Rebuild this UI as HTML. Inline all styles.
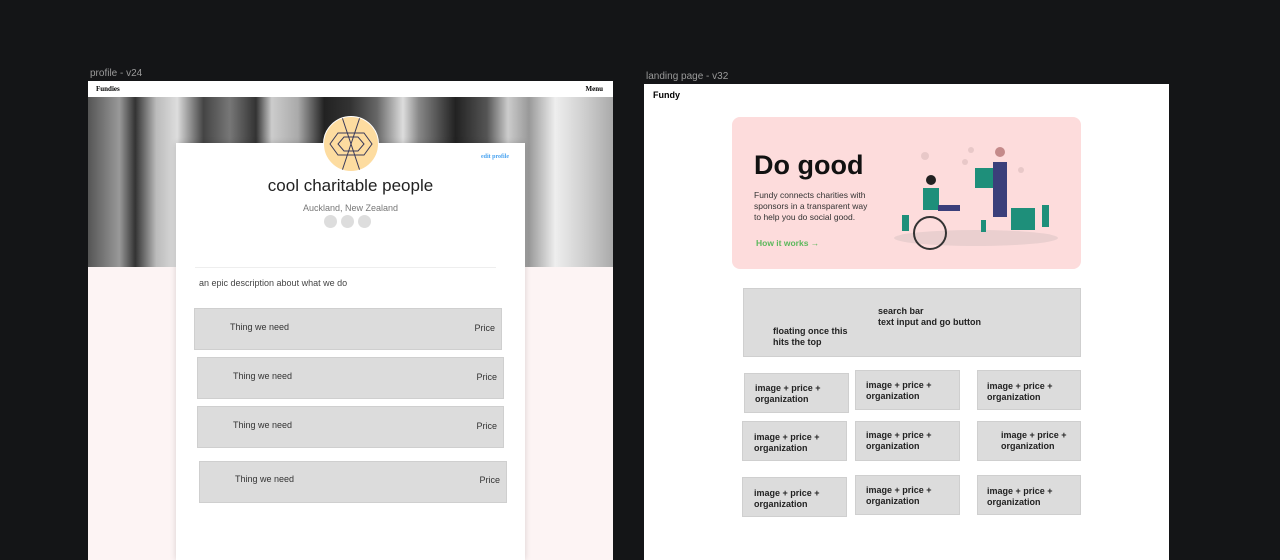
<!DOCTYPE html>
<html><head><style>
body{margin:0;width:1280px;height:560px;background:#141517;position:relative;overflow:hidden;font-family:"Liberation Sans",sans-serif}
.a{position:absolute}
.lbl{color:#9a9a9a;font-size:10px}
.g{background:#dcdcdc;border:1px solid #cfcfcf;box-sizing:border-box;position:absolute;font-size:9px;color:#333}
.p{font-size:9px;font-weight:bold;color:#222;line-height:11px}
</style></head><body>
<div class="a lbl" style="left:90px;top:68px">profile - v24</div>
<div class="a lbl" style="left:646px;top:71px">landing page - v32</div>

<!-- profile frame -->
<div class="a" style="left:88px;top:81px;width:525px;height:479px;background:#fdf4f4"></div>
<div class="a" style="left:88px;top:81px;width:525px;height:16px;background:#fff;font-family:'Liberation Serif',serif;font-size:7px;font-weight:bold">
<span class="a" style="left:8px;top:4px">Fundies</span><span class="a" style="right:10px;top:4px">Menu</span></div>
<div class="a" style="left:88px;top:97px;width:525px;height:170px;background:linear-gradient(90deg,#555 0,#999 6%,#333 9%,#bbb 13%,#ddd 17%,#444 22%,#777 27%,#333 32%,#ccc 35%,#aaa 40%,#222 45%,#333 50%,#666 55%,#ddd 60%,#888 63%,#222 70%,#555 76%,#ccc 80%,#999 84%,#eee 89%,#ccc 95%,#aaa 100%)"></div>
<div class="a" style="left:176px;top:143px;width:349px;height:417px;background:#fff;box-shadow:0 0 6px rgba(0,0,0,.15)"></div>
<div class="a" style="left:323px;top:116px;width:54px;height:54px;border-radius:50%;background:#fddca0;border:1px solid #fff;overflow:hidden">
<svg width="54" height="54" viewBox="0 0 54 54" fill="none" stroke="#3a3a5a" stroke-width="1"><path d="M18 0L36 54M36 0L18 54M0 27h0M14 16h26l8 11-8 11H14L6 27zM20 20h14l6 7-6 7H20l-6-7z"/></svg></div>
<div class="a" style="left:481px;top:154px;font-family:'Liberation Serif',serif;font-size:6px;color:#4aa3f0;font-weight:bold">edit profile</div>
<div class="a" style="left:176px;width:349px;top:176px;text-align:center;font-size:17px;color:#222">cool charitable people</div>
<div class="a" style="left:176px;width:349px;top:203px;text-align:center;font-size:9px;color:#777">Auckland, New Zealand</div>
<div class="a" style="left:324px;top:215px;width:13px;height:13px;border-radius:50%;background:#ddd"></div>
<div class="a" style="left:341px;top:215px;width:13px;height:13px;border-radius:50%;background:#ddd"></div>
<div class="a" style="left:358px;top:215px;width:13px;height:13px;border-radius:50%;background:#ddd"></div>
<div class="a" style="left:195px;top:267px;width:301px;height:1px;background:#eee"></div>
<div class="a" style="left:199px;top:278px;font-size:9px;color:#444">an epic description about what we do</div>
<div class="g" style="left:194px;top:308px;width:308px;height:42px"><span class="a" style="left:35px;top:13px">Thing we need</span><span class="a" style="right:6px;top:14px">Price</span></div>
<div class="g" style="left:197px;top:357px;width:307px;height:42px"><span class="a" style="left:35px;top:13px">Thing we need</span><span class="a" style="right:6px;top:14px">Price</span></div>
<div class="g" style="left:197px;top:406px;width:307px;height:42px"><span class="a" style="left:35px;top:13px">Thing we need</span><span class="a" style="right:6px;top:14px">Price</span></div>
<div class="g" style="left:199px;top:461px;width:308px;height:42px"><span class="a" style="left:35px;top:12px">Thing we need</span><span class="a" style="right:6px;top:13px">Price</span></div>

<!-- landing frame -->
<div class="a" style="left:644px;top:84px;width:525px;height:476px;background:#fff"></div>
<div class="a" style="left:653px;top:90px;font-size:9px;font-weight:bold">Fundy</div>
<div class="a" style="left:732px;top:117px;width:349px;height:152px;background:#fddcdc;border-radius:8px"></div>
<div class="a" style="left:754px;top:150px;font-size:27px;font-weight:bold;color:#111">Do good</div>
<div class="a" style="left:754px;top:190px;font-size:8.5px;color:#333;line-height:11px">Fundy connects charities with<br>sponsors in a transparent way<br>to help you do social good.</div>
<div class="a" style="left:756px;top:238px;font-size:8.5px;font-weight:bold;color:#5cb85c">How it works →</div>
<svg class="a" style="left:893px;top:140px" width="170" height="110">
<ellipse cx="83" cy="98" rx="82" ry="8" fill="#eacfcf"/>
<circle cx="32" cy="16" r="4" fill="#e8c8c8"/><circle cx="78" cy="10" r="3" fill="#e8c8c8"/><circle cx="72" cy="22" r="3" fill="#e8c8c8"/><circle cx="128" cy="30" r="3" fill="#e8c8c8"/>
<circle cx="37" cy="103" r="16" fill="none" stroke="#333" stroke-width="2" transform="translate(0,-10)"/>
<rect x="30" y="48" width="16" height="22" fill="#1e8f7a"/><rect x="45" y="65" width="22" height="6" fill="#3b3f7a"/>
<circle cx="38" cy="40" r="5" fill="#222"/>
<rect x="100" y="22" width="14" height="55" fill="#3b3f7a"/><circle cx="107" cy="12" r="5" fill="#c48a8a"/>
<rect x="82" y="28" width="18" height="20" fill="#1e8f7a"/>
<rect x="118" y="68" width="24" height="22" fill="#1e8f7a"/>
<rect x="9" y="75" width="7" height="16" fill="#1e8f7a"/><rect x="149" y="65" width="7" height="22" fill="#1e8f7a"/><rect x="88" y="80" width="5" height="12" fill="#1e8f7a"/>
</svg>
<div class="g" style="left:743px;top:288px;width:338px;height:69px"><span class="p a" style="left:134px;top:17px">search bar<br>text input and go button</span><span class="p a" style="left:29px;top:37px">floating once this<br>hits the top</span></div>
<div class="g" style="left:744px;top:373px;width:105px;height:40px"><span class="p a" style="left:10px;top:9px">image + price +<br>organization</span></div>
<div class="g" style="left:855px;top:370px;width:105px;height:40px"><span class="p a" style="left:10px;top:9px">image + price +<br>organization</span></div>
<div class="g" style="left:977px;top:370px;width:104px;height:40px"><span class="p a" style="left:9px;top:10px">image + price +<br>organization</span></div>
<div class="g" style="left:742px;top:421px;width:105px;height:40px"><span class="p a" style="left:11px;top:10px">image + price +<br>organization</span></div>
<div class="g" style="left:855px;top:421px;width:105px;height:40px"><span class="p a" style="left:10px;top:8px">image + price +<br>organization</span></div>
<div class="g" style="left:977px;top:421px;width:104px;height:40px"><span class="p a" style="left:23px;top:8px">image + price +<br>organization</span></div>
<div class="g" style="left:742px;top:477px;width:105px;height:40px"><span class="p a" style="left:11px;top:10px">image + price +<br>organization</span></div>
<div class="g" style="left:855px;top:475px;width:105px;height:40px"><span class="p a" style="left:10px;top:9px">image + price +<br>organization</span></div>
<div class="g" style="left:977px;top:475px;width:104px;height:40px"><span class="p a" style="left:9px;top:10px">image + price +<br>organization</span></div>
</body></html>
